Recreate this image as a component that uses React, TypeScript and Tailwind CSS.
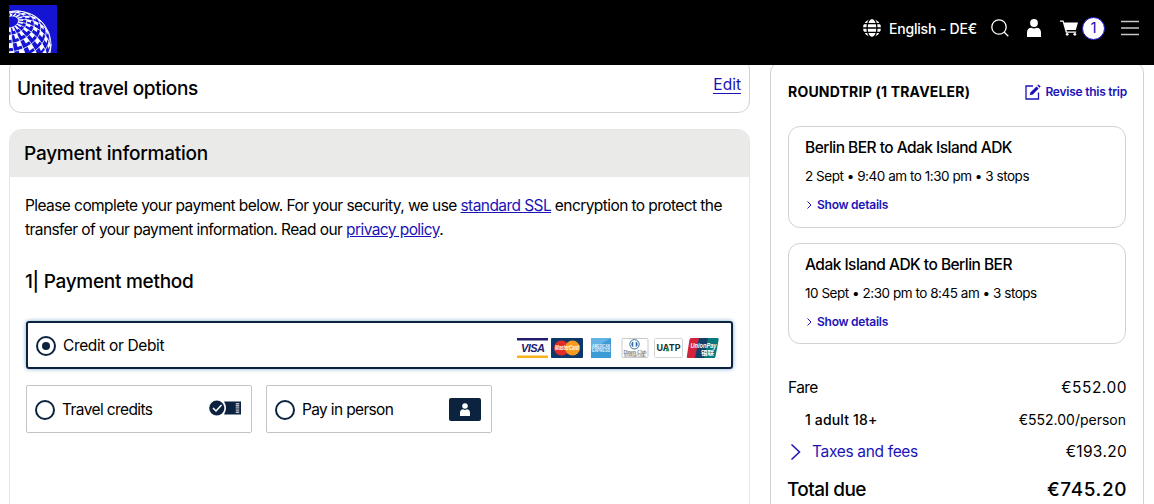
import React from 'react';

interface TripCardProps {
  title: string;
  details: string;
  className: string;
}

interface OptionProps {
  label: string;
  labelClass: string;
  children: React.ReactNode;
}

// Projects a latitude/longitude on the tilted logo globe to 48x48 logo space.
const project = (colat: number, lon: number) => {
  const a = (colat * Math.PI) / 180;
  const b = (lon * Math.PI) / 180;
  const p = [-0.2, -0.7, 0.686];
  const u = [0.9615, -0.2747, 0];
  const v = [
    p[1] * u[2] - p[2] * u[1],
    p[2] * u[0] - p[0] * u[2],
    p[0] * u[1] - p[1] * u[0],
  ];
  const q = [0, 1, 2].map(
    (i) => Math.cos(a) * p[i] + Math.sin(a) * (Math.cos(b) * u[i] + Math.sin(b) * v[i]),
  );
  return { x: 8 + 34 * q[0], y: 40 + 34 * q[1], z: q[2] };
};

const buildGlobe = () => {
  let lines = '';
  let blocks = '';
  const segment = (c1: number, l1: number, c2: number, l2: number) => {
    const a = project(c1, l1);
    const b = project(c2, l2);
    if (a.z > 0 && b.z > 0) {
      lines += `M${a.x.toFixed(2)} ${a.y.toFixed(2)}L${b.x.toFixed(2)} ${b.y.toFixed(2)}`;
    }
  };
  for (let c = 14; c <= 150; c += 14) {
    for (let l = 0; l < 360; l += 6) segment(c, l, c, l + 6);
    for (let l = 0; l < 360; l += 20) {
      segment(c, l, c + 14, l);
      const pts = [project(c, l), project(c, l + 10), project(c + 8, l + 10), project(c + 8, l)];
      if (pts.every((p) => p.z > 0)) {
        blocks += `M${pts.map((p) => `${p.x.toFixed(2)} ${p.y.toFixed(2)}`).join('L')}Z`;
      }
    }
  }
  return { lines, blocks };
};

const globe = buildGlobe();

const Logo = () => (
  <svg className="size-12" viewBox="0 0 48 48">
    <rect width="48" height="48" fill="#1414d2" />
    <path d={globe.blocks} fill="#fff" />
    <path d={globe.lines} stroke="#fff" strokeWidth="0.8" fill="none" />
    <circle cx="8" cy="40" r="34" stroke="#fff" strokeWidth="0.9" fill="none" />
  </svg>
);

const GlobeIcon = () => (
  <svg className="h-[18px] w-[18px]" viewBox="0 0 18 18" fill="none" stroke="#000" strokeWidth="1.3">
    <circle cx="9" cy="9" r="9" fill="#fff" stroke="none" />
    <ellipse cx="9" cy="9" rx="5" ry="9.6" />
    <path d="M0 4.600h18M0 9h18M0 13.400h18" />
  </svg>
);

const PersonIcon = ({ className }: { className: string }) => (
  <svg className={className} viewBox="0 0 14 18" fill="#fff">
    <circle cx="7" cy="4" r="3.9" />
    <path d="M0 18v-4.500C0 10.600 1.800 8.800 4.300 8.800c1.700 1 3.700 1 5.400 0 2.500 0 4.300 1.800 4.300 4.700V18z" />
  </svg>
);

const CardLogos = () => (
  <svg className="h-5 w-[202px]" viewBox="0 0 202 20">
    <rect width="31" height="20" fill="#fff" />
    <rect width="31" height="2.500" fill="#221c70" />
    <rect y="17.500" width="31" height="2.500" fill="#f7b21c" />
    <text x="4" y="14" fontSize="11" fontWeight="bold" fontStyle="italic" textLength="24" fill="#221c70" fontFamily="Liberation Sans, sans-serif">VISA</text>

    <rect x="34" width="32" height="20" rx="1" fill="#0c3768" />
    <circle cx="44.500" cy="10" r="7.500" fill="#e32b2a" />
    <circle cx="55.500" cy="10" r="7.500" fill="#f79b20" />
    <text x="38" y="12.300" fontSize="6.500" fontWeight="bold" fontStyle="italic" textLength="24" lengthAdjust="spacingAndGlyphs" fill="#fff" fontFamily="Liberation Sans, sans-serif">MasterCard</text>

    <rect x="74" width="20" height="20" rx="0.500" fill="#3d9bd5" />
    <path d="M74 0h20L74 12z" fill="#62b3e3" />
    <text x="75" y="10" fontSize="4.500" fontWeight="bold" textLength="18" lengthAdjust="spacingAndGlyphs" fill="#e9f6fd" fontFamily="Liberation Sans, sans-serif">AMERICAN</text>
    <text x="75" y="14" fontSize="4.500" fontWeight="bold" textLength="18" lengthAdjust="spacingAndGlyphs" fill="#e9f6fd" fontFamily="Liberation Sans, sans-serif">EXPRESS</text>

    <rect x="105" y="0.500" width="26" height="19" rx="1" fill="#fff" stroke="#c9c9c9" />
    <circle cx="117.500" cy="6.300" r="4.700" fill="#fff" stroke="#326ea8" strokeWidth="1" />
    <path d="M116.300 3.400a3.100 3.100 0 0 0 0 5.800zM118.700 3.400a3.100 3.100 0 0 1 0 5.800z" fill="#326ea8" />
    <text x="106.500" y="15.500" fontSize="5.500" textLength="23" lengthAdjust="spacingAndGlyphs" fill="#333" fontFamily="Liberation Serif, serif">Diners Club</text>
    <text x="107" y="18.500" fontSize="2.800" textLength="22" lengthAdjust="spacingAndGlyphs" fill="#555" fontFamily="Liberation Sans, sans-serif">INTERNATIONAL</text>

    <rect x="137.500" y="0.500" width="28" height="19" rx="1" fill="#fff" stroke="#d5d5d5" />
    <text x="139.500" y="13.300" fontSize="9" fontWeight="bold" textLength="24" lengthAdjust="spacingAndGlyphs" fill="#16342d" fontFamily="Inter, sans-serif">UATP</text>
    <path d="M148.500 13.300l1.800-4 1.800 4z" fill="#3f9b4c" />

    <path d="M174 0h11l-4 20h-10q-1.500 0-1.200-1.500L172.500 1.500Q173 0 174 0z" fill="#d2233c" />
    <path d="M182 0h10l-4 20h-10z" fill="#123f68" />
    <path d="M191 0h9.500q1.500 0 1.200 1.500l-3.200 17q-.4 1.500-1.500 1.500h-10z" fill="#08797b" />
    <text x="173.500" y="9.800" fontSize="7" fontWeight="bold" fontStyle="italic" textLength="26" lengthAdjust="spacingAndGlyphs" fill="#fff" fontFamily="Liberation Sans, sans-serif">UnionPay</text>
    <text x="184" y="16.500" fontSize="6" fontWeight="bold" textLength="13" lengthAdjust="spacingAndGlyphs" fill="#fff" fontFamily="Noto Sans CJK SC, sans-serif">银联</text>
  </svg>
);

const Option: React.FC<OptionProps> = ({ label, labelClass, children }) => (
  <div className="flex h-12 w-[226px] items-center rounded-xs border border-[#c4c4c4] pt-0.5 pr-2.5 pl-2">
    <span className="size-5 rounded-full border-2 border-[#0c2340]" />
    <span className={`ml-[7px] flex-1 text-[15.5px] ${labelClass}`}>{label}</span>
    {children}
  </div>
);

const TripCard: React.FC<TripCardProps> = ({ title, details, className }) => (
  <div className={`rounded-xl border border-[#d2d2d2] px-4 ${className}`}>
    <h3 className="h-6 text-[15.5px] leading-6 font-medium tracking-[-0.53px]">{title}</h3>
    <p className="mt-1 h-6 text-[13.5px] leading-6 tracking-[-0.47px]">{details}</p>
    <a className="mt-[5px] flex h-6 items-center text-[12px] font-semibold tracking-[-0.25px] text-[#1b13b8]">
      <svg className="mr-1 h-2 w-2" viewBox="0 0 8 8" fill="none" stroke="currentColor">
        <path d="M2.500 0.500L6 4L2.500 7.500" />
      </svg>
      Show details
    </a>
  </div>
);

export default function App() {
  return (
    <div className="flex h-[504px] w-[1154px] flex-col overflow-hidden bg-white font-['Inter',sans-serif] text-black">
      <header className="z-10 flex h-[65px] shrink-0 items-start bg-black pt-[5px] pr-[15px] pl-[9px] text-white">
        <Logo />
        <div className="ml-auto flex h-12 items-center pb-0.5">
          <GlobeIcon />
          <span className="mt-px ml-2 w-[88px] text-[14px] font-medium tracking-[-0.2px] whitespace-nowrap">English - DE€</span>
          <svg className="ml-3.5 size-[18px] shrink-0" viewBox="0 0 18 18" fill="none" stroke="#fff" strokeWidth="1.300">
            <circle cx="8" cy="8" r="7.200" />
            <path d="M13 13l4.300 4.300" />
          </svg>
          <PersonIcon className="ml-[18px] h-[18px] w-[14px]" />
          <svg className="ml-[19px] h-4 w-[18px]" viewBox="0 0 18 16" fill="#fff">
            <path d="M0 0.500h3.500l.7 2H18l-2.200 7.500H6.500l.4 1.500h9.300v1.200H5.800L2.700 1.700H0z" />
            <circle cx="7.200" cy="14.300" r="1.400" />
            <circle cx="14.800" cy="14.300" r="1.400" />
          </svg>
          <span className="ml-1 flex size-[23px] items-center justify-center rounded-full border border-[#1b13d0] bg-white text-[15px] text-[#1b13b8]">1</span>
          <svg className="ml-4 h-4 w-[18px]" viewBox="0 0 18 16" stroke="#c8c8c8" strokeWidth="1.500">
            <path d="M0 1.500h18M0 8h18M0 14.500h18" />
          </svg>
        </div>
      </header>

      <main className="flex flex-1 items-start pl-[9px]">
        <section className="w-[741px]">
          <div className="-mt-2 flex h-14 justify-between rounded-[12px] border border-[#d2d2d2] pt-[19px] pr-[8px] pl-[7px]">
            <h2 className="text-[19px] leading-6 font-medium tracking-[-0.33px]">United travel options</h2>
            <a className="-mt-[3px] h-[20px] border-b border-[#1b13b8] text-[15.5px] leading-[22px] text-[#1b13b8]">Edit</a>
          </div>

          <div className="mt-4 h-[400px] overflow-hidden rounded-t-[12px] border border-[#e6e6e6]">
            <h2 className="h-[47px] bg-[#eaeae8] pl-[14px] text-[19px] leading-[48px] font-medium tracking-[-0.23px]">
              Payment information
            </h2>
            <div className="px-4 pt-[17px]">
              <p className="-ml-px text-[15.5px] leading-6 tracking-[-0.575px] whitespace-nowrap">
                Please complete your payment below. For your security, we use{' '}
                <a className="text-[#1b13b8] underline">standard SSL</a> encryption to protect the
                <br />
                transfer of your payment information. Read our{' '}
                <a className="text-[#1b13b8] underline">privacy policy</a>.
              </p>
              <h3 className="mt-[28px] -ml-px text-[19px] leading-6 font-medium tracking-[-0.28px]">1| Payment method</h3>

              <div className="mt-[27px] flex h-12 w-[707px] items-center rounded-[3px] border-2 border-[#0c2340] pt-px pr-3 pl-2 shadow-[0_0_4px_#7fa8cc]">
                <span className="flex size-5 items-center justify-center rounded-full border-2 border-[#0c2340]">
                  <span className="size-2 rounded-full bg-[#0c2340]" />
                </span>
                <span className="ml-[7px] flex-1 text-[15.5px] tracking-[-0.37px]">Credit or Debit</span>
                <div className="flex pt-1">
                  <CardLogos />
                </div>
              </div>

              <div className="mt-4 flex gap-[14px]">
                <Option label="Travel credits" labelClass="tracking-[-0.6px]">
                  <svg className="mb-1 h-4 w-8" viewBox="0 0 32 16">
                    <path d="M15 1.500h17v13H15q4-6.500 0-13z" fill="#0c2340" />
                    <circle cx="7.800" cy="8" r="7.600" fill="#0c2340" />
                    <path d="M4 8l3 3 5.500-6" fill="none" stroke="#fff" strokeWidth="1.500" />
                    <path d="M28.500 3v10" stroke="#b9c2cc" strokeWidth="3.500" strokeDasharray="1.200 0.600" />
                  </svg>
                </Option>
                <Option label="Pay in person" labelClass="tracking-[-0.65px]">
                  <span className="mb-px flex h-[23px] w-8 items-center justify-center rounded-xs bg-[#0c2340]">
                    <PersonIcon className="h-[13px] w-2.5" />
                  </span>
                </Option>
              </div>
            </div>
          </div>
        </section>

        <aside className="-mt-1 ml-5 h-[460px] w-[374px] rounded-t-[12px] border border-[#d2d2d2] px-[17px]">
          <div className="mt-[18px] flex h-6 items-center justify-between">
            <h2 className="-mt-0.5 text-[14px] font-bold tracking-[0.2px]">ROUNDTRIP (1 TRAVELER)</h2>
            <a className="-mr-px flex items-center text-[12px] font-semibold tracking-[-0.25px] text-[#1b13b8]">
              <svg className="mr-1 size-4" viewBox="0 0 16 16" fill="none" stroke="currentColor" strokeWidth="1.300">
                <path d="M8 2H1v13h12.500V8.500" />
                <path d="M4.800 11.300l.8-3L11.500 2.400l2.200 2.200-5.900 5.900z" fill="currentColor" stroke="none" />
                <path d="M12.300 1.600L13.500.4l2.200 2.200-1.200 1.200z" fill="currentColor" stroke="none" />
              </svg>
              Revise this trip
            </a>
          </div>
          <TripCard
            title="Berlin BER to Adak Island ADK"
            details="2 Sept • 9:40 am to 1:30 pm • 3 stops"
            className="mt-[22px] h-[102px] pt-[9px]"
          />
          <TripCard
            title="Adak Island ADK to Berlin BER"
            details="10 Sept • 2:30 pm to 8:45 am • 3 stops"
            className="mt-[15px] h-[101px] pt-[8.500px]"
          />
          <div className="mt-8 text-[15.5px] leading-6">
            <div className="flex justify-between">
              <span className="tracking-[-0.6px]">Fare</span>
              <span className="-mr-px tracking-[0.5px]">€552.00</span>
            </div>
            <div className="mt-2 flex justify-between pl-[17px] text-[14px] leading-6">
              <span className="font-medium tracking-[0.15px]">1 adult 18+</span>
              <span>€552.00/person</span>
            </div>
            <div className="mt-2 flex items-center justify-between">
              <span className="flex items-center tracking-[-0.33px] text-[#1b13b8]">
                <svg className="mr-2 h-4 w-4" viewBox="0 0 16 16" fill="none" stroke="currentColor" strokeWidth="1.500">
                  <path d="M3.500 0.500L11.500 8L3.500 15.500" />
                </svg>
                Taxes and fees
              </span>
              <span className="-mr-px tracking-[0.3px]">€193.20</span>
            </div>
            <div className="mt-[14px] flex justify-between text-[19px] leading-6 font-medium">
              <span className="-ml-px tracking-[-0.55px]">Total due</span>
              <span className="-mr-px tracking-[0.57px]">€745.20</span>
            </div>
          </div>
        </aside>
      </main>
    </div>
  );
}
